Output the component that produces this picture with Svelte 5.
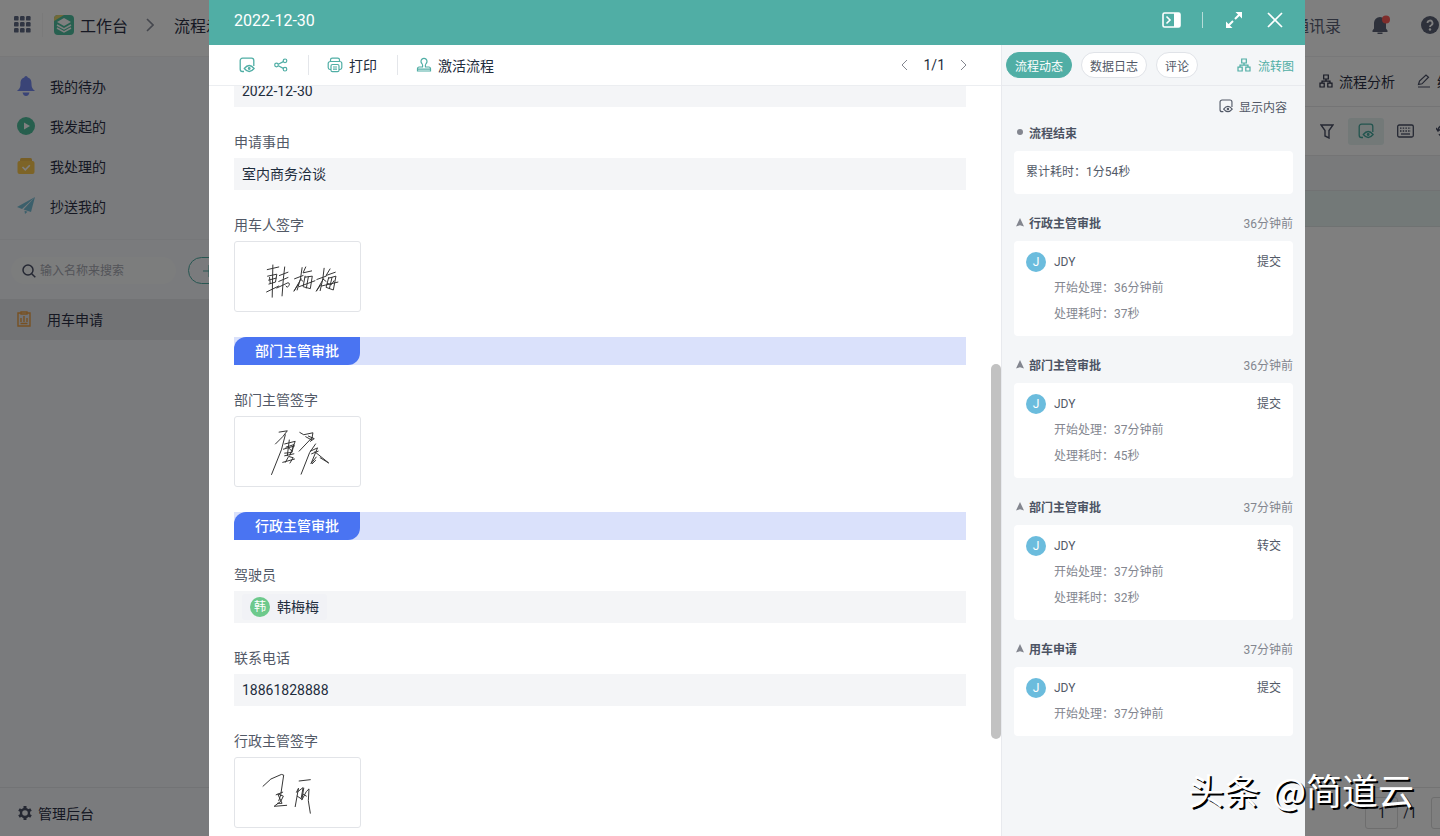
<script>
  const menu = [
    { icon: 'bell', label: '我的待办' },
    { icon: 'play', label: '我发起的' },
    { icon: 'done', label: '我处理的' },
    { icon: 'plane', label: '抄送我的' },
  ];

  const fields = [
    { type: 'text', value: '2022-12-30' },
    { type: 'text', label: '申请事由', value: '室内商务洽谈' },
    { type: 'sign', label: '用车人签字', sign: 'han' },
    { type: 'section', label: '部门主管审批' },
    { type: 'sign', label: '部门主管签字', sign: 'tang' },
    { type: 'section', label: '行政主管审批' },
    { type: 'member', label: '驾驶员', value: '韩梅梅' },
    { type: 'text', label: '联系电话', value: '18861828888' },
    { type: 'sign', label: '行政主管签字', sign: 'wang' },
  ];

  const steps = [
    { title: '行政主管审批', ago: '36分钟前', action: '提交', start: '36分钟前', cost: '37秒' },
    { title: '部门主管审批', ago: '36分钟前', action: '提交', start: '37分钟前', cost: '45秒' },
    { title: '部门主管审批', ago: '37分钟前', action: '转交', start: '37分钟前', cost: '32秒' },
    { title: '用车申请', ago: '37分钟前', action: '提交', start: '37分钟前' },
  ];

  // pen strokes of each signature, on a 378x210 pad
  const signs = {
    han: [
      'M114 70L112 168M97 84L132 76M98 104L126 98L122 122L102 128M101 116L124 110M95 152L132 134M104 108L106 126',
      'M150 76L146 112L142 164M134 102L160 92M132 120L160 108M126 140L160 124Q170 126 158 138L154 134',
      'M203 78L198 112L188 146M180 112L206 102M200 112L178 150L192 128M198 113L206 120',
      'M214 76L206 94L232 88M212 104L206 136L228 142L234 104L212 107M222 106L216 140M194 136L242 118',
      'M270 80L266 112L258 148M248 114L276 104M268 112L246 150L260 130M267 113L276 120',
      'M288 82L276 102L304 92M284 108L276 138L298 146L306 104L284 110M294 108L286 142M262 134L312 122M280 126L292 130L300 118',
    ],
    tang: [
      'M133 46L158 42L144 60L122 82M152 54L140 100L110 175',
      'M150 82L182 74L166 116M146 98L180 88M154 92L178 84L172 108L150 110M164 70L158 118M158 90L172 104M150 118L178 112M152 138L162 120L176 124L166 140M144 138L180 128',
      'M196 47L208 54L236 48L232 70L214 60M234 62L194 104M222 58L240 66L228 74',
      'M244 82L226 108L200 174M228 104L250 94L230 142L246 122M232 112L252 104M242 106L284 140L258 124M244 132L234 142',
    ],
    wang: [
      'M84 86L108 64L140 50L147 52L138 112L132 130',
      'M124 112L144 104M130 110L146 116L138 132L118 147L156 144M130 112L142 138L128 138',
      'M194 70L228 66',
      'M186 104L192 92L182 148M188 104L206 90L200 124L188 116M208 92L202 128L216 102L224 94L222 130L228 168M206 110L216 116',
    ],
  };

  let tab = '流程动态';
</script>

<div class="app">
  <div class="workspace">
    <header class="topbar">
      <button class="icon-btn" aria-label="应用">
        <svg width="17" height="17" viewBox="0 0 17 17" fill="#606a85">
          {#each [0, 6, 12] as y}
            {#each [0, 6, 12] as x}
              <rect {x} {y} width="4.6" height="4.6" rx="1.2" />
            {/each}
          {/each}
        </svg>
      </button>
      <span class="logo">
        <svg width="20" height="20" viewBox="0 0 20 20">
          <rect width="20" height="20" rx="4" fill="#4fc0a0" />
          <path d="M0 4a4 4 0 0 1 4-4h6L0 6z" fill="#e5d36e" />
          <path d="M3 7l7-4 7 4-7 4z" fill="#fff" />
          <path d="M3 10l7 4 7-4M3 13l7 4 7-4" fill="none" stroke="#fff" stroke-width="1.5" />
        </svg>
        工作台
      </span>
      <svg class="crumb" width="8" height="14" viewBox="0 0 8 14" fill="none" stroke="#8a8f9c" stroke-width="1.6">
        <path d="M1 1l6 6-6 6" />
      </svg>
      <span>流程示例</span>
      <nav class="top-right">
        <a href="#contacts">通讯录</a>
        <button class="icon-btn" aria-label="消息">
          <svg width="20" height="20" viewBox="0 0 20 20">
            <path d="M9 2a6 6 0 0 0-6 6v5.500l-1.500 2V17h15v-1.500l-1.500-2V8a6 6 0 0 0-6-6zM6.500 17.500h5V19h-5z" fill="#5c6276" />
            <circle cx="15" cy="4.500" r="4" fill="#ff5a56" />
          </svg>
        </button>
        <button class="icon-btn" aria-label="帮助">
          <svg width="18" height="18" viewBox="0 0 18 18">
            <circle cx="9" cy="9" r="9" fill="#5c6276" />
            <path d="M6.500 7a2.500 2.500 0 1 1 3.700 2.200Q9 9.800 9 11" fill="none" stroke="#fff" stroke-width="1.800" />
            <circle cx="9" cy="13.500" r="1.200" fill="#fff" />
          </svg>
        </button>
      </nav>
    </header>

    <div class="columns">
      <aside class="sidebar">
        <nav class="menu">
          {#each menu as item}
            <a class="menu-item" href="#{item.icon}">
              <svg width="18" height="20" viewBox="0 0 18 20">
                {#if item.icon === 'bell'}
                  <path d="M9 0a2 2 0 0 1 1.800 1.500C14 2.500 14.500 5 14.500 8c0 4 1.500 5 3.500 7H0c2-2 3.500-3 3.500-7 0-3 .5-5.500 3.700-6.500A2 2 0 0 1 9 0z" fill="#7488ee" />
                  <path d="M5.500 16.500h7Q11.500 20 9 20t-3.500-3.500z" fill="#7488ee" />
                {:else if item.icon === 'play'}
                  <circle cx="9" cy="10" r="9" fill="#4fbf9c" />
                  <path d="M7 6.500l6 3.500-6 3.500z" fill="#fff" />
                {:else if item.icon === 'done'}
                  <rect x="3" y="2" width="12" height="4" rx="1.500" fill="#efbd4d" />
                  <rect x="0.500" y="5" width="17" height="13" rx="2" fill="#fbc84f" />
                  <path d="M5.500 11l2.800 2.800 4.500-4.500" fill="none" stroke="#fff" stroke-width="1.600" />
                {:else}
                  <path d="M18 1L0 11l5 2zM18 1L6.500 13.500 14 16zM7.500 14.800L8 18l2.500-2.300z" fill="#77bfd6" />
                {/if}
              </svg>
              {item.label}
            </a>
          {/each}
        </nav>
        <div class="search-row">
          <label class="search">
            <svg width="14" height="14" viewBox="0 0 14 14" fill="none" stroke="#4a5066" stroke-width="1.500">
              <circle cx="6" cy="6" r="5" />
              <path d="M9.700 9.700l3.600 3.600" />
            </svg>
            <input type="text" placeholder="输入名称来搜索" aria-label="搜索" />
          </label>
          <button class="add" aria-label="新建">
            <svg width="12" height="12" viewBox="0 0 12 12" stroke="#50aea5"><path d="M0 6h12M6 0v12" /></svg>
          </button>
        </div>
        <a class="form-item" href="#car">
          <svg width="14" height="16" viewBox="0 0 14 16" fill="none" stroke="#efa144" stroke-width="1.400">
            <path d="M4 2H1v13h12V2h-3M4 1h6v2H4zM7 5v6M4 7v4M10 7v4M3.500 12.500h7" />
          </svg>
          用车申请
        </a>
        <button class="admin">
          <svg width="14" height="14" viewBox="0 0 14 14" fill="none" stroke="#4a5066">
            <circle cx="7" cy="7" r="4" stroke-width="2.400" />
            <path d="M7 0v3M7 11v3M1 3.500l2.500 1.500M10.500 9l2.500 1.500M1 10.500L3.500 9M10.500 5L13 3.500" stroke-width="3" />
          </svg>
          管理后台
        </button>
      </aside>

      <section class="board">
        <div class="board-bar">
          <button class="flat">{@render flowIcon(14)}流程分析</button>
          <button class="flat">
            <svg width="14" height="14" viewBox="0 0 14 14" fill="none" stroke="#4a5066" stroke-width="1.200">
              <path d="M1.500 10.500l1-3.500L9 1l2.500 2.200L5 9.800zM1 13h12" />
            </svg>
            编辑
          </button>
        </div>
        <div class="board-bar tools">
          <button class="tool" aria-label="筛选">
            <svg width="14" height="15" viewBox="0 0 14 15" fill="none" stroke="#4a5066" stroke-width="1.400">
              <path d="M1 1h12L9 6.500V14l-4-2V6.500z" />
            </svg>
          </button>
          <button class="tool active" aria-label="显示字段">{@render eyeIcon(16)}</button>
          <button class="tool" aria-label="快捷键">
            <svg width="17" height="14" viewBox="0 0 17 14" fill="none" stroke="#4a5066" stroke-width="1.300">
              <rect x="0.700" y="1" width="15.600" height="12" rx="1.500" />
              <path d="M3 4.200h11M3 7h11" stroke-dasharray="1.500 1.200" />
              <path d="M4 10h9" />
            </svg>
          </button>
          <button class="tool" aria-label="刷新">
            <svg width="16" height="16" viewBox="0 0 16 16" fill="none" stroke="#4a5066" stroke-width="1.400">
              <path d="M2 7a6 6 0 0 1 11-2M14 9a6 6 0 0 1-11 2M0 5l2 3 3-2M16 11l-2-3-3 2" />
            </svg>
          </button>
        </div>
        <div class="grid-head"></div>
        <div class="grid-row"></div>
        <footer class="pager">
          <input type="text" value="1" aria-label="页码" />
          <span>/1</span>
          <button class="next" aria-label="下一页"></button>
        </footer>
      </section>
    </div>
  </div>

  <div class="mask">
    <div class="dialog" role="dialog" aria-label="2022-12-30">
      <header class="dialog-head">
        <h1>2022-12-30</h1>
        <button class="icon-btn" aria-label="收起侧栏">
          <svg width="19" height="16" viewBox="0 0 19 16" fill="none" stroke="#fff" stroke-width="1.600">
            <rect x="1" y="1" width="17" height="14" rx="1.500" />
            <path d="M12 1h6v14h-6z" fill="#fff" stroke="none" />
            <path d="M4.500 4.500L8 8l-3.500 3.500" />
          </svg>
        </button>
        <i class="head-line"></i>
        <button class="icon-btn" aria-label="全屏">
          <svg width="18" height="18" viewBox="0 0 18 18" fill="#fff">
            <path d="M10.500 1H17v6.500zM1 10.500V17h6.500z" />
            <path d="M10 8l5-5M3 15l5-5" stroke="#fff" stroke-width="2" />
          </svg>
        </button>
        <button class="icon-btn close" aria-label="关闭">
          <svg width="16" height="16" viewBox="0 0 16 16" stroke="#fff" stroke-width="1.700"><path d="M1 1l14 14M15 1L1 15" /></svg>
        </button>
      </header>

      <div class="dialog-body">
        <section class="record">
          <div class="record-bar">
            <button class="icon-btn teal" aria-label="显示字段">{@render eyeIcon(16)}</button>
            <button class="icon-btn share" aria-label="分享">
              <svg width="14" height="14" viewBox="0 0 14 14" fill="none" stroke="#50aea5" stroke-width="1.200">
                <circle cx="2.500" cy="7" r="1.800" />
                <circle cx="11" cy="2.800" r="1.800" />
                <circle cx="11" cy="11.200" r="1.800" />
                <path d="M4.300 6.200l5-2.600M4.300 7.800l5 2.600" />
              </svg>
            </button>
            <i class="bar-line"></i>
            <button class="flat">
              <svg width="16" height="16" viewBox="0 0 16 16" fill="none" stroke="#50aea5" stroke-width="1.200">
                <path d="M3.500 4.500V3A1.800 1.800 0 0 1 5.300 1.200h5.400A1.800 1.800 0 0 1 12.500 3v1.500M4 12.500H3A2 2 0 0 1 1.200 10.500v-4a2 2 0 0 1 2-2h9.600a2 2 0 0 1 2 2v4a2 2 0 0 1-1.800 2h-1" />
                <rect x="4" y="7.500" width="8" height="7.200" rx="1.500" />
                <path d="M6 10h4M6 12.200h4" />
              </svg>
              打印
            </button>
            <i class="bar-line"></i>
            <button class="flat">
              <svg width="16" height="16" viewBox="0 0 16 16" fill="none" stroke="#50aea5" stroke-width="1.200">
                <path d="M6.500 10q.6-2-.6-3.500a3 3 0 1 1 4.200 0Q8.900 8 9.500 10H13q1.500.3 1.500 1.500V14h-13v-2.500Q1.500 10.300 3 10zM1.500 12.200h13" />
              </svg>
              激活流程
            </button>
            <div class="turner">
              <button class="icon-btn" aria-label="上一条">
                <svg width="7" height="12" viewBox="0 0 7 12" fill="none" stroke="#83868f"><path d="M6 1L1 6l5 5" /></svg>
              </button>
              <span>1/1</span>
              <button class="icon-btn" aria-label="下一条">
                <svg width="7" height="12" viewBox="0 0 7 12" fill="none" stroke="#83868f"><path d="M1 1l5 5-5 5" /></svg>
              </button>
            </div>
          </div>

          <div class="record-view">
            <div class="form">
              {#each fields as f}
                {#if f.type === 'section'}
                  <div class="section"><h2>{f.label}</h2></div>
                {:else}
                  <div class="field">
                    {#if f.label}<div class="name">{f.label}</div>{/if}
                    {#if f.type === 'sign'}
                      <div class="sign">
                        <svg viewBox="0 0 378 210" role="img" aria-label={f.label}>
                          {#each signs[f.sign] as d}
                            <path {d} />
                          {/each}
                        </svg>
                      </div>
                    {:else if f.type === 'member'}
                      <div class="value">
                        <span class="member"><span class="avatar green">韩</span>{f.value}</span>
                      </div>
                    {:else}
                      <div class="value">{f.value}</div>
                    {/if}
                  </div>
                {/if}
              {/each}
            </div>
            <div class="thumb"></div>
          </div>
        </section>

        <aside class="flow">
          <div class="tabs">
            {#each ['流程动态', '数据日志', '评论'] as name}
              <button class="tab" class:on={tab === name} on:click={() => (tab = name)}>{name}</button>
            {/each}
            <a class="chart" href="#chart">{@render flowIcon(14)}流转图</a>
          </div>
          <div class="flow-list">
            <button class="show">{@render eyeIcon(14)}显示内容</button>
            <div class="step-head"><i class="dot"></i><b>流程结束</b></div>
            <div class="card">累计耗时：1分54秒</div>
            {#each steps as step}
              <div class="step-head">
                <svg width="8" height="10" viewBox="0 0 8 10" fill="#83868f"><path d="M4 1l4 8.500-4-1.300-4 1.300z" /></svg>
                <b>{step.title}</b>
                <time>{step.ago}</time>
              </div>
              <div class="card">
                <div class="who">
                  <span class="avatar">J</span>
                  <span>JDY</span>
                  <span class="action">{step.action}</span>
                </div>
                <p>开始处理：{step.start}</p>
                {#if step.cost}<p>处理耗时：{step.cost}</p>{/if}
              </div>
            {/each}
          </div>
        </aside>
      </div>
    </div>
  </div>

  <div class="watermark"><span>头条</span><span>@简道云</span></div>
</div>

{#snippet eyeIcon(size)}
  <svg width={size} height={size} viewBox="0 0 16 16" fill="none" stroke="currentColor" stroke-width="1.300">
    <path d="M5 14.500H3.500A2.300 2.300 0 0 1 1.200 12.200V3.500A2.300 2.300 0 0 1 3.500 1.200h9A2.300 2.300 0 0 1 14.800 3.500V9" />
    <path d="M5.300 11.500q4.900-6 9.800 0-4.900 6-9.800 0z" />
    <circle cx="10.200" cy="11.500" r="0.800" />
  </svg>
{/snippet}

{#snippet flowIcon(size)}
  <svg width={size} height={size} viewBox="0 0 14 14" fill="none" stroke="currentColor" stroke-width="1.200">
    <path d="M4.700 1h4.600v4H4.700zM1 9.200h4.200V13H1zM8.800 9.200H13V13H8.800zM7 5v2.200M3 9.200v-2h8v2" />
  </svg>
{/snippet}

<style>
  :global(body) {
    overflow: hidden;
  }

  .app {
    position: relative;
    height: 100vh;
    overflow: hidden;
    font-family: Roboto, 'Noto Sans CJK SC', sans-serif;
    font-size: 14px;
    color: #1f2d3d;
  }

  .app * {
    box-sizing: border-box;
  }

  button,
  input {
    font: inherit;
    color: inherit;
    border: 0;
    padding: 0;
    background: none;
  }

  a {
    color: inherit;
    text-decoration: none;
  }

  svg {
    display: block;
    flex: none;
  }

  .icon-btn {
    display: flex;
    align-items: center;
  }

  .flat {
    display: flex;
    align-items: center;
    gap: 6px;
    white-space: nowrap;
  }

  /* page behind the dialog, a bit wider than the window */
  .workspace {
    width: calc(100% + 40px);
    height: 100%;
    display: flex;
    flex-direction: column;
    background: #fff;
    color: #2c3046;
  }

  .topbar {
    height: 57px;
    padding: 0 41px 7px 14px;
    display: flex;
    align-items: center;
    font-size: 16px;
    border-bottom: 1px solid #f0f0f2;
  }

  .logo {
    display: flex;
    align-items: center;
    gap: 6px;
    margin-left: 11px;
    padding-left: 11px;
    border-left: 1px solid #f4f4f4;
  }

  .crumb {
    margin: 0 20px 0 18px;
  }

  .top-right {
    display: flex;
    align-items: center;
    gap: 30px;
    margin-left: auto;
    color: #5c6276;
  }

  .columns {
    flex: 1;
    display: flex;
    min-height: 0;
  }

  .sidebar {
    width: 260px;
    display: flex;
    flex-direction: column;
    background: #f4f6fa;
    border-right: 1px solid #e6e8ec;
  }

  .menu {
    padding: 9px 0 13px;
    border-bottom: 1px solid #edeff2;
  }

  .menu-item {
    height: 40px;
    padding-left: 17px;
    display: flex;
    align-items: center;
    gap: 15px;
  }

  .search-row {
    display: flex;
    gap: 12px;
    padding: 17px 11px 15px;
  }

  .search {
    width: 165px;
    height: 27px;
    padding-left: 11px;
    display: flex;
    align-items: center;
    gap: 4px;
    border-radius: 14px;
    background: #f9fafb;
    font-size: 12px;
  }

  .search input {
    width: 110px;
    outline: none;
  }

  .search input::placeholder {
    color: #a6a9b2;
  }

  .add {
    flex: 1;
    padding-left: 14px;
    border: 1px solid #50aea5;
    border-radius: 14px;
  }

  .form-item {
    height: 41px;
    padding: 0 0 1px 17px;
    display: flex;
    align-items: center;
    gap: 16px;
    background: #e5e7eb;
  }

  .admin {
    height: 49px;
    margin-top: auto;
    padding: 2px 0 0 18px;
    display: flex;
    align-items: center;
    gap: 6px;
    border-top: 1px solid #e4e6ea;
  }

  .board {
    flex: 1;
    display: flex;
    flex-direction: column;
  }

  .board-bar {
    height: 50px;
    padding: 0 15px 2px 0;
    display: flex;
    align-items: center;
    justify-content: flex-end;
    gap: 22px;
    border-bottom: 1px solid #e8e8ea;
  }

  .tools {
    height: 49px;
    padding: 0 18px 0 0;
    gap: 3px;
  }

  .tool {
    width: 36px;
    height: 27px;
    display: grid;
    place-items: center;
    border-radius: 3px;
  }

  .tool.active {
    color: #44a89c;
    background: #e6f3f1;
  }

  .grid-head {
    height: 35px;
    background: #f2f4f6;
    border-bottom: 1px solid #e2e4e6;
  }

  .grid-row {
    height: 36px;
    background: #e7f3f1;
    border-bottom: 1px solid #dfe5e4;
  }

  .pager {
    height: 49px;
    margin-top: auto;
    padding: 2px 17px 0 0;
    display: flex;
    align-items: center;
    justify-content: flex-end;
    border-top: 1px solid #e6e6e6;
  }

  .pager input {
    width: 33px;
    height: 32px;
    margin-right: 5px;
    text-align: center;
    border: 1px solid #dcdcdc;
    border-radius: 3px;
  }

  .next {
    width: 32px;
    height: 32px;
    margin-left: 14px;
    border: 1px solid #dcdcdc;
    border-radius: 3px;
  }

  .mask {
    position: absolute;
    inset: 0;
    display: flex;
    padding: 0 135px 0 209px;
    background: rgba(0, 0, 0, 0.5);
  }

  .dialog {
    flex: 1;
    display: flex;
    flex-direction: column;
    background: #fff;
  }

  .dialog-head {
    height: 45px;
    padding: 0 22px 5px 25px;
    display: flex;
    align-items: center;
    background: #50aea5;
    color: #fff;
  }

  h1 {
    margin: 0 auto 0 0;
    font-size: 16px;
    font-weight: 400;
  }

  .head-line {
    width: 1px;
    height: 16px;
    margin: 0 22px 0 21px;
    background: #b5dcd8;
  }

  .close {
    margin-left: 24px;
  }

  .dialog-body {
    flex: 1;
    display: flex;
    min-height: 0;
  }

  .record {
    flex: 1;
    display: flex;
    flex-direction: column;
  }

  .record-bar {
    height: 41px;
    padding: 0 34px 0 30px;
    display: flex;
    align-items: center;
    border-bottom: 1px solid #eceef1;
  }

  .teal {
    color: #50aea5;
  }

  .share {
    margin-left: 19px;
  }

  .bar-line {
    width: 1px;
    height: 20px;
    margin: 0 18px 0 20px;
    background: #e4e6ea;
  }

  .turner {
    display: flex;
    align-items: center;
    gap: 15px;
    margin-left: auto;
  }

  .record-view {
    position: relative;
    flex: 1;
    overflow: hidden;
  }

  .form {
    display: flex;
    flex-direction: column;
    gap: 25px;
    margin-top: -11px;
    padding: 0 35px 0 25px;
  }

  .name {
    margin-bottom: 6px;
    line-height: 20px;
    color: #525967;
  }

  .value {
    height: 32px;
    padding: 0 8px;
    line-height: 32px;
    background: #f4f5f7;
  }

  .member {
    display: inline-flex;
    align-items: center;
    gap: 7px;
    height: 26px;
    margin-top: 3px;
    padding: 0 8px;
    border-radius: 3px;
    background: #f1f2f6;
    vertical-align: top;
  }

  .sign {
    width: 127px;
    height: 71px;
    border: 1px solid #e2e4e8;
    border-radius: 3px;
  }

  .sign svg {
    width: 100%;
    height: 100%;
    fill: none;
    stroke: #333;
    stroke-width: 3;
    stroke-linecap: round;
    stroke-linejoin: round;
  }

  .section {
    height: 28px;
    background: #dae1fb;
  }

  h2 {
    width: 126px;
    margin: 0;
    border-radius: 12px 0;
    background: #4a74f2;
    color: #fff;
    font-size: 14px;
    font-weight: 500;
    line-height: 28px;
    text-align: center;
  }

  .thumb {
    position: absolute;
    top: 37%;
    right: 0;
    width: 10px;
    height: 50%;
    border-radius: 5px;
    background: #c2c2c2;
  }

  .flow {
    width: 304px;
    border-left: 1px solid #e8eaee;
    background: #f4f6f8;
    font-size: 12px;
    color: #525967;
  }

  .tabs {
    height: 41px;
    padding: 0 11px 0 4px;
    display: flex;
    align-items: center;
    gap: 9px;
    border-bottom: 1px solid #e8eaee;
  }

  .tab {
    height: 26px;
    padding: 0 8px;
    border: 1px solid #e0e3e8;
    border-radius: 13px;
    background: #fff;
  }

  .tab.on {
    border-color: #50aea5;
    background: #50aea5;
    color: #fff;
  }

  .chart {
    display: flex;
    align-items: center;
    gap: 7px;
    margin-left: auto;
    color: #50aea5;
  }

  .flow-list {
    padding: 10px 12px 0;
  }

  .show {
    display: flex;
    align-items: center;
    gap: 6px;
    height: 20px;
    margin: 0 6px 6px auto;
  }

  .step-head {
    display: flex;
    align-items: center;
    gap: 5px;
    height: 20px;
    margin-bottom: 9px;
    padding-left: 2px;
    color: #4c5363;
  }

  .step-head b {
    font-weight: 700;
  }

  .step-head time {
    margin-left: auto;
    color: #83868f;
  }

  .dot {
    width: 6px;
    height: 6px;
    margin: 0 1px;
    border-radius: 50%;
    background: #83868f;
  }

  .card {
    margin-bottom: 18px;
    padding: 8px 12px 9px;
    border-radius: 4px;
    background: #fff;
    line-height: 26px;
  }

  .who {
    display: flex;
    align-items: center;
    gap: 8px;
  }

  .avatar {
    width: 20px;
    height: 20px;
    border-radius: 50%;
    background: #6bbcdd;
    color: #fff;
    font-size: 12px;
    line-height: 20px;
    text-align: center;
  }

  .green {
    background: #6dc98c;
  }

  .action {
    margin-left: auto;
  }

  p {
    margin: 0 0 0 28px;
    color: #83868f;
  }

  .watermark {
    position: absolute;
    right: 26px;
    bottom: 22px;
    display: flex;
    gap: 12px;
    color: #fff;
    font-family: 'Noto Sans CJK SC', sans-serif;
    font-size: 36px;
    line-height: 50px;
    text-shadow: 2px 2px 0 #000;
  }
</style>
